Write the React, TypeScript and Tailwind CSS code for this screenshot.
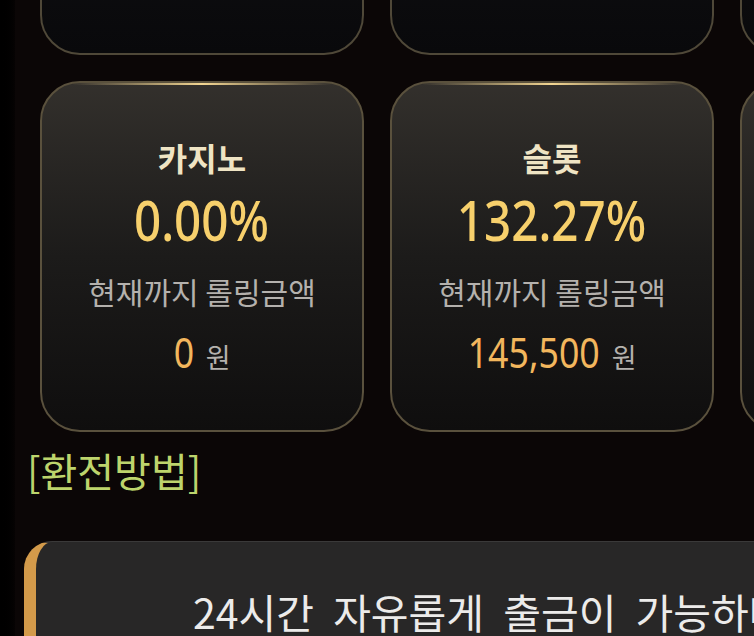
const font = "font-['Noto_Sans_CJK_KR','Noto_Sans',sans-serif]";
const num = "font-['Noto_Sans',sans-serif] inline-block scale-x-[0.85]";

type Stat = { name: string; rate: string; amount: string };

const stats: Stat[] = [
  { name: "카지노", rate: "0.00%", amount: "0" },
  { name: "슬롯", rate: "132.27%", amount: "145,500" },
  { name: "", rate: "", amount: "" },
];

// Noto Sans advance widths (em), used to trim the space a condensed number leaves
const adv: Record<string, number> = { ",": 0.258, ".": 0.268, "%": 0.857 };
const trim = (text: string, size: number) =>
  -([...text].reduce((w, c) => w + (adv[c] ?? 0.572), 0) * size * 0.075);

function DarkCard() {
  return (
    <div className="w-[324px] h-[351px] shrink-0 rounded-[40px] border-2 border-[#4f4838] bg-gradient-to-b from-[#17171b] to-[#09090b]" />
  );
}

function StatCard({ stat }: { stat: Stat }) {
  const m = trim(stat.amount, 42);
  return (
    <div className="relative w-[324px] h-[351px] shrink-0 rounded-[40px] border-2 border-[#5a513d] bg-gradient-to-b from-[#33302c] via-[#1c1b1a] to-[#0f0e0e] overflow-hidden">
      <span className="absolute left-[30px] right-[30px] top-0 h-[2px] bg-gradient-to-r from-transparent via-[#f3d692] to-transparent" />
      {stat.name && (
        <div className="flex flex-col items-center pt-[56px]">
          <div className="text-[32px] leading-[36px] font-bold text-[#efe4c4]">{stat.name}</div>
          <div className={`mt-[18px] text-[56px] leading-[52px] font-medium text-[#f7d06c] ${num}`}>{stat.rate}</div>
          <div className="mt-[29px] text-[30px] leading-[34px] text-[#b4b1ad]">현재까지 롤링금액</div>
          <div className="mt-[24px] flex items-baseline gap-[12px] leading-[40px]">
            <span className={`text-[42px] text-[#f2b65d] ${num}`} style={{ marginLeft: m, marginRight: m }}>
              {stat.amount}
            </span>
            <span className="text-[27px] text-[#b4b1ad]">원</span>
          </div>
        </div>
      )}
    </div>
  );
}

export default function App() {
  return (
    <div className={`flex w-[754px] h-[636px] overflow-hidden bg-[#0b0606] ${font}`}>
      <div className="w-[15px] shrink-0 bg-gradient-to-r from-black to-[#060303]" />
      <div className="flex-1 min-w-0">
        <div className="flex gap-[26px] pl-[25px] -mt-[296px]">
          <DarkCard />
          <DarkCard />
          <DarkCard />
        </div>
        <div className="flex gap-[26px] pl-[25px] mt-[26px]">
          {stats.map((s, i) => (
            <StatCard key={i} stat={s} />
          ))}
        </div>
        <div className="mt-[16px] pl-[12px] text-[40px] leading-[44px] text-[#bdd46c]">[환전방법]</div>
        <div className="mt-[49px] ml-[9px] h-[120px] rounded-tl-[28px] border-l-[12px] border-[#d39a4a] bg-[#282727] border-t border-t-[#3a3939] pt-[43px] pl-[157px] whitespace-nowrap">
          <div className="text-[41px] leading-[52px] text-[#ecebea] [word-spacing:10px]">24시간 자유롭게 출금이 가능하며</div>
        </div>
      </div>
    </div>
  );
}
